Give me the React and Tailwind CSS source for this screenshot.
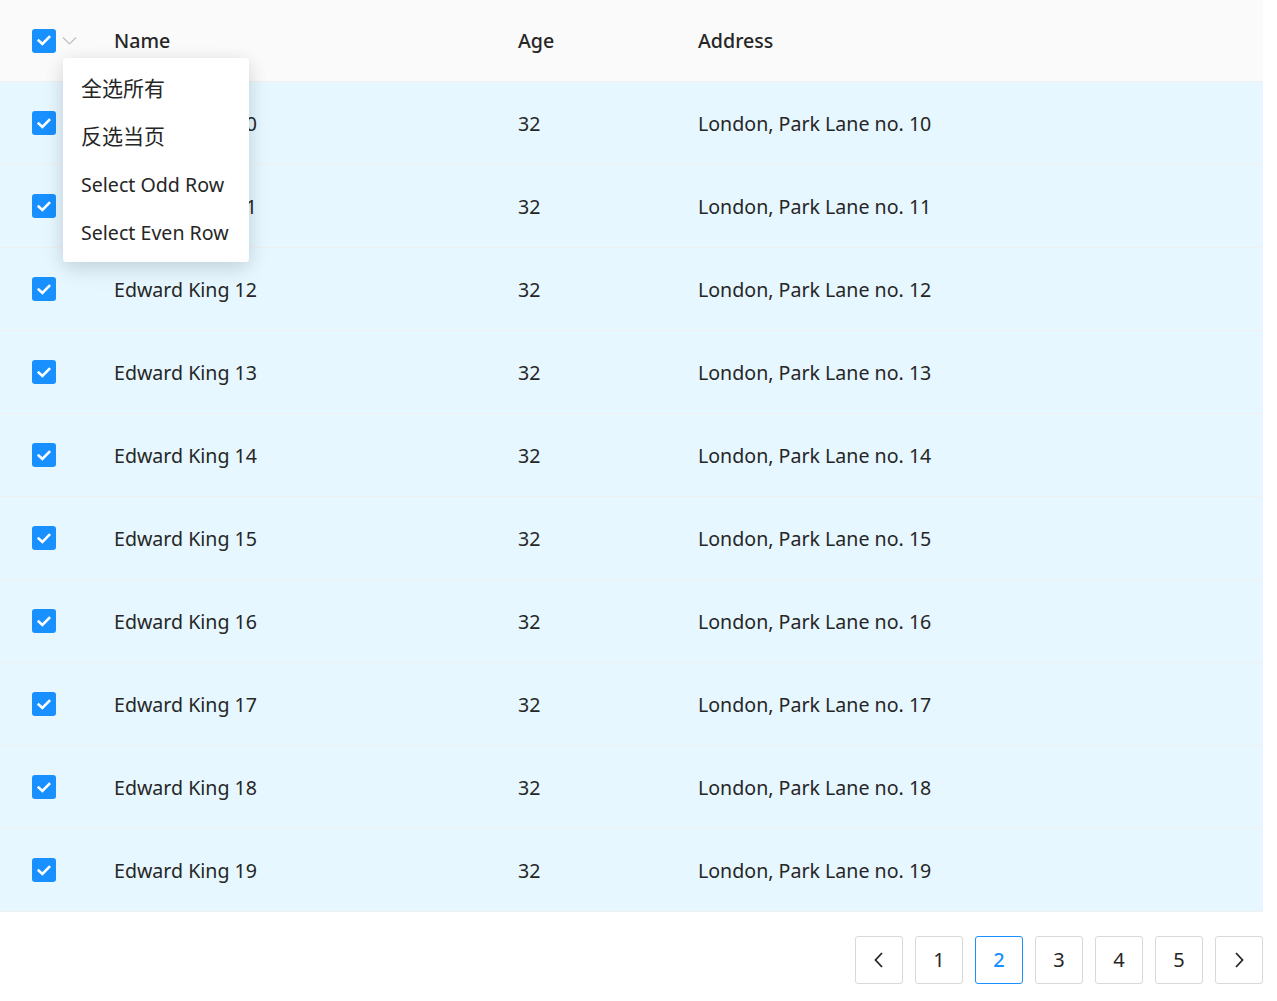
import React from "react";

const rows = [10, 11, 12, 13, 14, 15, 16, 17, 18, 19].map((n) => ({
  key: n,
  name: `Edward King ${n}`,
  age: 32,
  address: `London, Park Lane no. ${n}`,
}));

const menuItems = [
  { label: "全选所有", cjk: true },
  { label: "反选当页", cjk: true },
  { label: "Select Odd Row" },
  { label: "Select Even Row" },
];

const Checkbox = () => (
  <span className="inline-flex w-6 h-6 rounded-[3px] bg-[#1890ff] items-center justify-center">
    <svg width="14" height="11" viewBox="0 0 14 11" fill="none">
      <path d="M1.8 5.6 L5.4 9 L12.2 2" stroke="white" strokeWidth="2.6" strokeLinecap="square" />
    </svg>
  </span>
);

const PageBtn = ({ children, active }) => (
  <button
    className={`w-12 h-12 flex items-center justify-center rounded-[3px] border bg-white text-[20px] ${
      active ? "border-[#1890ff] text-[#1890ff] font-medium" : "border-[#d9d9d9] text-[#262626]"
    }`}
  >
    {children}
  </button>
);

export default function App() {
  return (
    <div
      className="relative w-[1263px] bg-white text-[19.6px] text-[#262626]"
      style={{ fontFamily: '"Noto Sans", "Noto Sans CJK SC", sans-serif' }}
    >
      {/* Header */}
      <div className="grid grid-cols-[90px_404px_180px_1fr] h-[82px] items-center bg-[#fafafa] border-b border-[#f0f0f0] font-medium">
        <div className="flex items-center pl-8 gap-[6px]">
          <Checkbox />
          <svg width="15" height="15" viewBox="0 0 15 15" fill="none">
            <path d="M1 4.5 L7.5 11 L14 4.5" stroke="#bfbfbf" strokeWidth="1.2" />
          </svg>
        </div>
        <div className="pl-6">Name</div>
        <div className="pl-6">Age</div>
        <div className="pl-6">Address</div>
      </div>

      {/* Body */}
      {rows.map((r) => (
        <div
          key={r.key}
          className="grid grid-cols-[90px_404px_180px_1fr] h-[83px] items-center bg-[#e6f7ff] border-b border-[#f0f0f0]"
        >
          <div className="flex items-center pl-8">
            <Checkbox />
          </div>
          <div className="pl-6 pt-[2px]">{r.name}</div>
          <div className="pl-6 pt-[2px]">{r.age}</div>
          <div className="pl-6 pt-[2px]">{r.address}</div>
        </div>
      ))}

      {/* Pagination */}
      <div className="flex justify-end gap-3 mt-6 h-[65px]">
        <PageBtn>
          <svg width="14" height="18" viewBox="0 0 14 18" fill="none">
            <path d="M10 2 L3.5 9 L10 16" stroke="#262626" strokeWidth="1.8" />
          </svg>
        </PageBtn>
        {[1, 2, 3, 4, 5].map((p) => (
          <PageBtn key={p} active={p === 2}>
            {p}
          </PageBtn>
        ))}
        <PageBtn>
          <svg width="14" height="18" viewBox="0 0 14 18" fill="none">
            <path d="M4 2 L10.5 9 L4 16" stroke="#262626" strokeWidth="1.8" />
          </svg>
        </PageBtn>
      </div>

      {/* Selection dropdown */}
      <div className="absolute left-[63px] top-[58px] w-[186px] py-[6px] bg-white rounded-[3px] shadow-[0_4px_18px_rgba(0,0,0,0.12),0_9px_28px_rgba(0,0,0,0.05)]">
        {menuItems.map((m) => (
          <div
            key={m.label}
            className={`h-12 flex items-center pl-[18px] whitespace-nowrap ${m.cjk ? "text-[21px] pt-[2px]" : "pt-[2px]"}`}
          >
            {m.label}
          </div>
        ))}
      </div>
    </div>
  );
}
